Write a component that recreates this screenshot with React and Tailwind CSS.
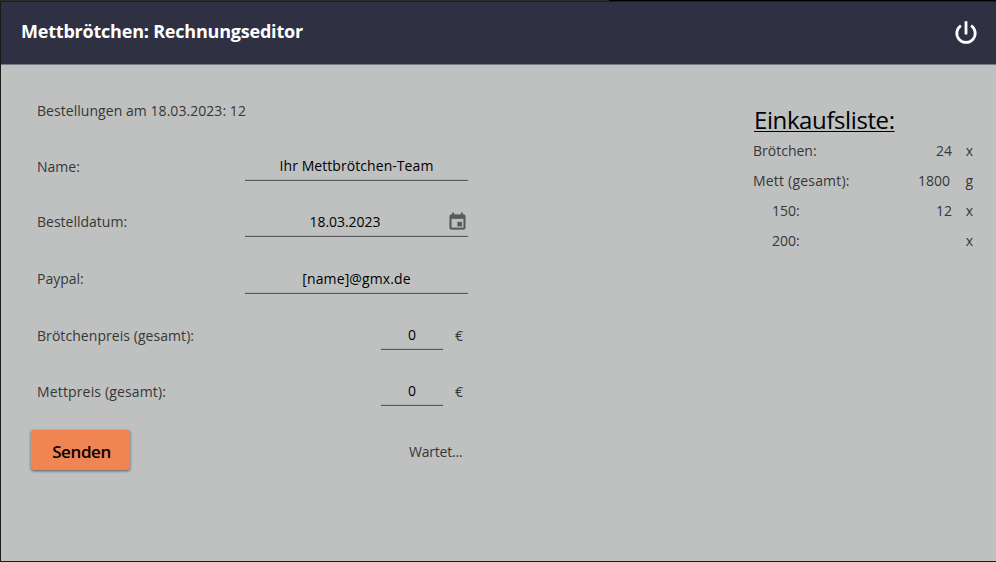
const TEXT = "text-[14px] leading-[20px] whitespace-pre";

function Underline() {
  return (
    <div className="mt-auto">
      <div className="h-px bg-[#aeb0af]" />
      <div className="h-px bg-[#595a5a]" />
    </div>
  );
}

function FormRow({ height, labelPad, label, labelClass = "", children }) {
  return (
    <div className={`flex ${height}`}>
      <div className={`w-[208px] shrink-0 text-[#363737] ${TEXT} ${labelPad} ${labelClass}`}>{label}</div>
      {children}
    </div>
  );
}

function Field({ pad, valueClass = "", children, icon }) {
  return (
    <div className="flex w-[223px] flex-col">
      <div className={`flex ${pad}`}>
        <div className={`flex-1 text-center text-black ${TEXT} ${valueClass}`}>{children}</div>
        {icon}
      </div>
      <Underline />
    </div>
  );
}

function PriceField() {
  return (
    <div className="flex pl-[136px]">
      <div className="flex w-[62px] flex-col">
        <div className={`pt-[31px] text-center text-black ${TEXT}`}>0</div>
        <Underline />
      </div>
      <div className={`pt-[32px] pl-[12px] text-[#363737] ${TEXT}`}>€</div>
    </div>
  );
}

function CalendarIcon() {
  return (
    <svg className="h-[20px] w-[21px] shrink-0" viewBox="0 0 24 24" preserveAspectRatio="none" fill="#595a5a" stroke="#595a5a" strokeWidth="0.350">
      <path d="M17 12h-5v5h5v-5zM16 1v2H8V1H6v2H5c-1.110 0-1.990.9-1.990 2L3 19c0 1.100.89 2 2 2h14c1.100 0 2-.9 2-2V5c0-1.100-.9-2-2-2h-1V1h-2zm3 18H5V8h14v11z" />
    </svg>
  );
}

function PowerIcon() {
  return (
    <svg className="h-[26px] w-[26px]" viewBox="0 0 26 26" fill="none" stroke="white" strokeWidth="2.800">
      <path d="M13 2.300v13.200M7.900 6.600a9.200 9.200 0 1 0 10.200 0" />
    </svg>
  );
}

function ListRow({ label, labelClass = "", amount, amountClass = "", unit, unitClass = "" }) {
  return (
    <div className={`flex h-[30px] text-[#363737] ${TEXT}`}>
      <div className={`w-[120px] ${labelClass}`}>{label}</div>
      <div className={`text-right ${amountClass}`}>{amount}</div>
      <div className={`ml-auto pr-px text-right ${unitClass}`}>{unit}</div>
    </div>
  );
}

export default function App() {
  return (
    <div className="flex h-[562px] w-[996px] flex-col overflow-hidden bg-[#bfc1c0] font-['Open_Sans','Noto_Sans',sans-serif]">
      <div className="flex h-px shrink-0">
        <div className="w-[609px] bg-[#2b2b2b]" />
        <div className="flex-1 bg-black" />
      </div>
      <div className="flex min-h-0 flex-1 flex-col border-b border-l border-[#1b1b1b]">
        <header className="flex h-[64px] shrink-0 justify-between border-t border-b border-t-[#1c1d27] border-b-[#777986] bg-[#2f3143] pr-[17px] pl-[20px]">
          <h1 className="pt-[17px] text-[18px] leading-[24px] font-bold tracking-[-0.21px] whitespace-pre text-white">Mettbrötchen: Rechnungseditor</h1>
          <div className="pt-[17px]"><PowerIcon /></div>
        </header>
        <main className="flex flex-1 justify-between">
          <div className="w-[480px] pl-[36px]">
            <div className={`h-[60px] pt-[36px] tracking-[0.050px] text-[#363737] ${TEXT}`}>Bestellungen am 18.03.2023: 12</div>
            <FormRow height="h-[56px]" labelPad="pt-[32px]" label="Name:">
              <Field pad="pt-[31px]" valueClass="tracking-[0.060px]">Ihr Mettbrötchen-Team</Field>
            </FormRow>
            <FormRow height="h-[56px]" labelPad="pt-[31px]" label="Bestelldatum:">
              <Field pad="pt-[31px]" valueClass="pr-[2px] tracking-[-0.050px]" icon={<CalendarIcon />}>18.03.2023</Field>
            </FormRow>
            <FormRow height="h-[57px]" labelPad="pt-[32px]" label="Paypal:">
              <Field pad="pt-[32px]" valueClass="tracking-[0.120px]">[name]@gmx.de</Field>
            </FormRow>
            <FormRow height="h-[56px]" labelPad="pt-[32px]" label="Brötchenpreis (gesamt):" labelClass="tracking-[0.060px]">
              <PriceField />
            </FormRow>
            <FormRow height="h-[56px]" labelPad="pt-[32px]" label="Mettpreis (gesamt):" labelClass="tracking-[0.150px]">
              <PriceField />
            </FormRow>
            <div className="-ml-[6px] flex pt-[24px]">
              <button className="h-[40px] w-[99px] rounded-[3px] bg-[#f08453] pt-[3px] pl-[2px] text-[17px] leading-[24px] font-semibold tracking-[-0.4px] text-black shadow-[0_1px_3px_rgba(0,0,0,0.55)]">Senden</button>
              <div className={`ml-[279px] pt-[12px] tracking-[-0.2px] text-[#363737] ${TEXT}`}>Wartet...</div>
            </div>
          </div>
          <aside className="w-[243px] pt-[36px] pr-[22px]">
            <h2 className="h-[40px] pt-[2px] pl-px text-[24px] leading-[34px] tracking-[-0.4px] whitespace-pre text-black underline decoration-1 underline-offset-2">Einkaufsliste:</h2>
            <ListRow label="Brötchen:" amount="24" amountClass="w-[79px]" unit="x" />
            <ListRow label="Mett (gesamt):" labelClass="tracking-[0.2px]" amount="1800" amountClass="w-[77px]" unit="g" />
            <ListRow label="150:" labelClass="pl-[19px]" amount="12" amountClass="w-[79px]" unit="x" />
            <ListRow label="200:" labelClass="pl-[19px]" unit="x" />
          </aside>
        </main>
      </div>
    </div>
  );
}
